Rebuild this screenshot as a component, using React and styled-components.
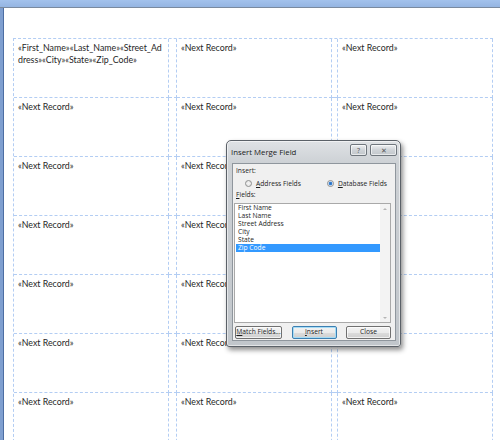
import React from 'react';
import styled, { createGlobalStyle } from 'styled-components';

const GlobalStyle = createGlobalStyle`
  html, body {
    margin: 0;
    padding: 0;
    overflow: hidden;
  }
`;

const Workspace = styled.div`
  position: relative;
  width: 500px;
  height: 440px;
  overflow: hidden;
  box-sizing: border-box;
  padding: 8px 0 0 4px;
  background: linear-gradient(to bottom, #a3c2ec 0, #95b5e2 7px, #7a8a9f 7px, #7a8a9f 8px, #7f9fd0 8px);
`;

const Page = styled.div`
  height: 100%;
  box-sizing: border-box;
  background: #fff;
  padding: 30px 0 0 9px;
  box-shadow: -1px 0 0 #4d6ea3;
`;

const LabelGrid = styled.div`
  display: grid;
  grid-template-columns: 155px 8px 155px 6px 155px;
  grid-auto-rows: 59px;
  border-top: 1px dashed #b3cdf3;
  border-left: 1px dashed #b3cdf3;
  width: max-content;
`;

const Cell = styled.div`
  box-sizing: border-box;
  border-right: 1px dashed #b3cdf3;
  border-bottom: 1px dashed #b3cdf3;
  padding: ${(p) => (p.$spacer ? '0' : '3px 3px 0 4px')};
  font-family: Lato, "Liberation Sans", sans-serif;
  font-size: 8.8px;
  line-height: 12px;
  color: #262626;
  white-space: nowrap;
`;

const Dialog = styled.div`
  position: absolute;
  left: 226px;
  top: 140px;
  width: 175px;
  height: 207px;
  box-sizing: border-box;
  display: flex;
  flex-direction: column;
  border: 1px solid #5b6168;
  border-radius: 5px 5px 3px 3px;
  background: linear-gradient(to bottom, #dfe2e5 0, #cdd1d5 22px, #c1c6cb 100%);
  box-shadow: inset 0 0 0 1px rgba(255, 255, 255, 0.55), 2px 3px 5px rgba(0, 0, 0, 0.45);
  font-family: "Open Sans", "Liberation Sans", sans-serif;
  font-size: 6.7px;
  color: #1e1e1e;
`;

const TitleBar = styled.div`
  height: 22px;
  display: flex;
  align-items: flex-start;
  justify-content: space-between;
  padding: 0 3px 0 4px;
`;

const Title = styled.div`
  padding-top: 6px;
  font-size: 7.8px;
  color: #1a1a1a;
`;

const Controls = styled.div`
  display: flex;
  gap: 3px;
  padding-top: 3px;
`;

const CtrlButton = styled.div`
  width: ${(p) => p.$w}px;
  height: 12px;
  box-sizing: border-box;
  border: 1px solid #6f767d;
  border-radius: 2px;
  background: linear-gradient(to bottom, #eef0f2, #cfd3d7 50%, #c2c7cc);
  box-shadow: inset 0 0 0 1px rgba(255, 255, 255, 0.6);
  display: flex;
  align-items: center;
  justify-content: center;
  font-size: 7px;
  color: #555;
  line-height: 1;
`;

const Client = styled.div`
  flex: 1;
  margin: 0 4px 5px 5px;
  box-sizing: border-box;
  border: 1px solid #8f969d;
  background: #f0f0f0;
  padding: 2px 4px 0 1px;
  display: flex;
  flex-direction: column;
`;

const Label = styled.div`
  padding-left: 2px;
  line-height: 10px;
  height: 10px;
`;

const RadioRow = styled.div`
  display: flex;
  align-items: center;
  height: 14px;
  padding-left: 11px;
  gap: 26px;
`;

const RadioOption = styled.label`
  display: flex;
  align-items: center;
  gap: 4px;
`;

const RadioDot = styled.span`
  width: 7px;
  height: 7px;
  box-sizing: border-box;
  border-radius: 50%;
  border: 1px solid #8e8f8f;
  background: radial-gradient(circle, ${(p) => (p.$checked ? '#2b6fbf 0, #3d86d6 1.5px, #e6eef8 2.2px' : '#f4f4f4 0')}, #e2e2e2 100%);
`;

const ListBox = styled.div`
  margin-top: 3px;
  height: 120px;
  box-sizing: border-box;
  border: 1px solid #a9a9a9;
  background: #fff;
  display: flex;
`;

const Items = styled.div`
  flex: 1;
  padding-left: 1px;
`;

const Item = styled.div`
  height: 8px;
  line-height: 8px;
  padding-left: 2px;
  background: ${(p) => (p.$selected ? '#3399ff' : 'transparent')};
  color: ${(p) => (p.$selected ? '#fff' : '#1e1e1e')};
  white-space: nowrap;
`;

const ScrollTrack = styled.div`
  width: 10px;
  background: #f3f3f3;
  display: flex;
  flex-direction: column;
  justify-content: space-between;
  align-items: center;
  padding: 4px 0 3px;
  box-sizing: border-box;
`;

const Arrow = styled.span`
  width: 0;
  height: 0;
  border-left: 2px solid transparent;
  border-right: 2px solid transparent;
  ${(p) => (p.$down ? 'border-top: 2px solid #b5b5b5;' : 'border-bottom: 2px solid #b5b5b5;')}
`;

const ButtonRow = styled.div`
  display: flex;
  justify-content: space-between;
  margin-top: 3px;
  padding-left: 1px;
`;

const Button = styled.div`
  width: ${(p) => p.$w}px;
  height: 13px;
  box-sizing: border-box;
  border: 1px solid ${(p) => (p.$default ? '#3c7fb1' : '#707070')};
  border-radius: 2px;
  background: linear-gradient(to bottom, #f2f2f2 0, #ebebeb 50%, #dddddd 50%, #cfcfcf 100%);
  box-shadow: ${(p) => (p.$default ? 'inset 0 0 0 1px #a6dcf6' : 'inset 0 0 0 1px rgba(255,255,255,0.7)')};
  display: flex;
  align-items: center;
  justify-content: center;
  line-height: 1;
`;

const fields = ['First Name', 'Last Name', 'Street Address', 'City', 'State', 'Zip Code'];

function LabelRow({ first }) {
  return (
    <>
      <Cell>
        {first ? (
          <>
            «First_Name»«Last_Name»«Street_Ad
            <br />
            dress»«City»«State»«Zip_Code»
          </>
        ) : (
          '«Next Record»'
        )}
      </Cell>
      <Cell $spacer />
      <Cell>«Next Record»</Cell>
      <Cell $spacer />
      <Cell>«Next Record»</Cell>
    </>
  );
}

export default function App() {
  return (
    <>
      <GlobalStyle />
      <Workspace>
        <Page>
          <LabelGrid>
            {[0, 1, 2, 3, 4, 5, 6].map((i) => (
              <LabelRow key={i} first={i === 0} />
            ))}
          </LabelGrid>
        </Page>

        <Dialog>
          <TitleBar>
            <Title>Insert Merge Field</Title>
            <Controls>
              <CtrlButton $w={17}>?</CtrlButton>
              <CtrlButton $w={27}>✕</CtrlButton>
            </Controls>
          </TitleBar>
          <Client>
            <Label>Insert:</Label>
            <RadioRow>
              <RadioOption>
                <RadioDot />
                <span><u>A</u>ddress Fields</span>
              </RadioOption>
              <RadioOption>
                <RadioDot $checked />
                <span><u>D</u>atabase Fields</span>
              </RadioOption>
            </RadioRow>
            <Label><u>F</u>ields:</Label>
            <ListBox>
              <Items>
                {fields.map((f) => (
                  <Item key={f} $selected={f === 'Zip Code'}>{f}</Item>
                ))}
              </Items>
              <ScrollTrack>
                <Arrow />
                <Arrow $down />
              </ScrollTrack>
            </ListBox>
            <ButtonRow>
              <Button $w={47}><u>M</u>atch Fields...</Button>
              <Button $w={45} $default><u>I</u>nsert</Button>
              <Button $w={45}>Close</Button>
            </ButtonRow>
          </Client>
        </Dialog>
      </Workspace>
    </>
  );
}
